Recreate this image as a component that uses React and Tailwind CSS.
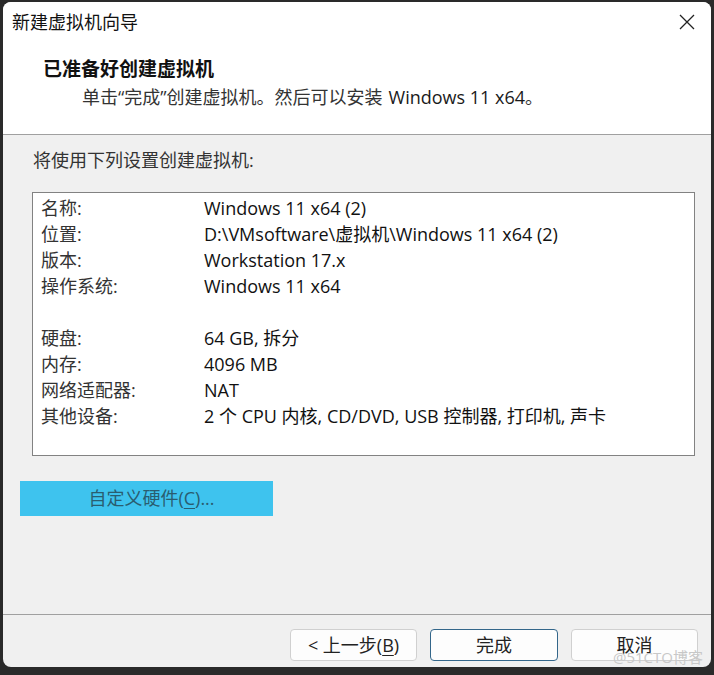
import React from "react";

const FONT = { fontFamily: '"Open Sans", "Noto Sans CJK SC", sans-serif' };

const rows = [
  ["名称:", "Windows 11 x64 (2)"],
  ["位置:", "D:\\VMsoftware\\虚拟机\\Windows 11 x64 (2)"],
  ["版本:", "Workstation 17.x"],
  ["操作系统:", "Windows 11 x64"],
  ["", ""],
  ["硬盘:", "64 GB, 拆分"],
  ["内存:", "4096 MB"],
  ["网络适配器:", "NAT"],
  ["其他设备:", "2 个 CPU 内核, CD/DVD, USB 控制器, 打印机, 声卡"],
];

export default function App() {
  return (
    <div
      className="w-[714px] h-[675px] bg-[#2a2a2a] pt-[2px] pl-[3px] pr-[3px] pb-[8px] overflow-hidden"
      style={FONT}
    >
      <div className="relative h-full w-full rounded-[8px] overflow-hidden bg-[#f0f0f0] flex flex-col text-[18px] text-[#1a1a1a]">
        {/* Header */}
        <div className="bg-white border-b border-[#a0a0a0] h-[133px] flex flex-col">
          <div className="h-[40px] flex items-center justify-between pl-[9px] pr-[15px]">
            <span className="text-[18px] leading-none text-[#111]">新建虚拟机向导</span>
            <svg width="18" height="18" viewBox="0 0 18 18" className="text-[#222]">
              <path d="M2 2 L16 16 M16 2 L2 16" stroke="currentColor" strokeWidth="1.3" fill="none" />
            </svg>
          </div>
          <div className="mt-[13px] pl-[40px] h-[28px] flex items-center font-bold text-[19px] text-[#111]">
            已准备好创建虚拟机
          </div>
          <div className="pl-[79px] h-[28px] flex items-center text-[18px] text-[#333]">
            单击“完成”创建虚拟机。然后可以安装 <span className="ml-[6px] text-[#1a1a1a]">Windows 11 x64</span>。
          </div>
        </div>

        {/* Body */}
        <div className="flex-1 flex flex-col">
          <div className="mt-[11px] pl-[30px] h-[28px] flex items-center text-[#333]">
            将使用下列设置创建虚拟机:
          </div>
          <div className="mt-[18px] ml-[29px] mr-[16px] h-[264px] bg-white border border-[#828282] pt-[2px]">
            {rows.map(([k, v], i) => (
              <div key={i} className="grid grid-cols-[163px_1fr] pl-[8px] h-[26px] items-center">
                <span className="text-[#333]">{k}</span>
                <span className="text-[#111] whitespace-nowrap">{v}</span>
              </div>
            ))}
          </div>
          <div className="mt-[25px] ml-[17px] w-[253px] h-[35px] bg-[#3ec3ee] flex items-center justify-center text-[#2a5d70]">
            <span className="ml-[10px]">
              自定义硬件(<span className="underline underline-offset-[3px]">C</span>)...
            </span>
          </div>
        </div>

        {/* Footer */}
        <div className="border-t border-[#a0a0a0] h-[53px] pt-[14px] pr-[13px] flex justify-end gap-[13px]">
          <div className="w-[127px] h-[32px] rounded-[4px] bg-[#fdfdfd] border border-[#d0d0d0] flex items-center justify-center text-[#222]">
            &lt; 上一步(<span className="underline underline-offset-[3px]">B</span>)
          </div>
          <div className="w-[128px] h-[32px] rounded-[4px] bg-[#fdfdfd] border border-[#33668a] flex items-center justify-center text-[#222]">
            完成
          </div>
          <div className="w-[127px] h-[32px] rounded-[4px] bg-[#fdfdfd] border border-[#d0d0d0] flex items-center justify-center text-[#222]">
            取消
          </div>
        </div>

        <div className="absolute right-[8px] bottom-[2px] text-[15px] text-[#c8c8c8] leading-none pointer-events-none">
          @51CTO博客
        </div>
      </div>
    </div>
  );
}
